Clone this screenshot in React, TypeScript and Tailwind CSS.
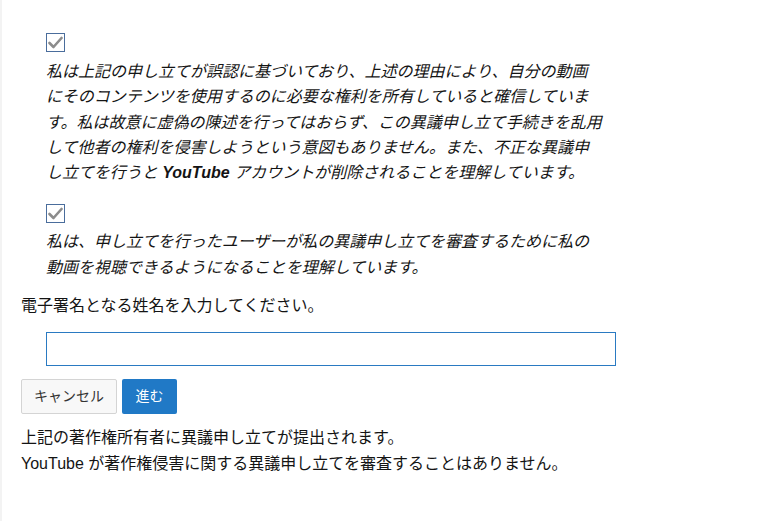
import React from 'react';

// Dispute confirmation form (YouTube copyright counter-notification, JA)

const FONT = { fontFamily: '"Liberation Sans", "Noto Sans CJK JP", sans-serif' };

function CheckedBox() {
  return (
    <div className="w-[19px] h-[19px] border border-[#4a6d9c] bg-white flex items-center justify-center">
      <svg width="15" height="13" viewBox="0 0 15 13">
        <polyline
          points="1.5,7 5.5,11 13.5,2"
          fill="none"
          stroke="#8c8c8c"
          strokeWidth="2.6"
          strokeLinecap="round"
          strokeLinejoin="round"
        />
      </svg>
    </div>
  );
}

export default function App() {
  return (
    <div className="min-h-[521px] bg-white border-l-2 border-[#f3f3f3] text-[#141414]" style={FONT}>
      <div className="pl-[19px] pt-[33px]">
        {/* First statement */}
        <div className="pl-[25px]">
          <CheckedBox />
          <p className="mt-[7px] text-[16px] leading-[25.3px] italic whitespace-nowrap">
            私は上記の申し立てが誤認に基づいており、上述の理由により、自分の動画
            <br />
            にそのコンテンツを使用するのに必要な権利を所有していると確信していま
            <br />
            す。私は故意に虚偽の陳述を行ってはおらず、この異議申し立て手続きを乱用
            <br />
            して他者の権利を侵害しようという意図もありません。また、不正な異議申
            <br />
            し立てを行うと <b className="font-bold">YouTube</b> アカウントが削除されることを理解しています。
          </p>
        </div>

        {/* Second statement */}
        <div className="pl-[25px] mt-[19px]">
          <CheckedBox />
          <p className="mt-[6px] text-[16px] leading-[25.3px] italic whitespace-nowrap">
            私は、申し立てを行ったユーザーが私の異議申し立てを審査するために私の
            <br />
            動画を視聴できるようになることを理解しています。
          </p>
        </div>

        <p className="mt-[13px] text-[16px] leading-[25px]">電子署名となる姓名を入力してください。</p>

        <div className="pl-[25px] mt-[14px]">
          <input
            type="text"
            className="block w-[570px] h-[34px] border border-[#2a7ac2] bg-white px-2 text-[16px] outline-none"
          />
        </div>

        <div className="flex gap-[5px] mt-[13px]">
          <button className="w-[96px] h-[35px] bg-[#f8f8f8] border border-[#d4d4d4] rounded-[2px] text-[14px] text-[#333]">
            キャンセル
          </button>
          <button className="w-[55px] h-[35px] bg-[#2079c6] rounded-[2px] text-[14px] text-white">
            進む
          </button>
        </div>

        <div className="mt-[11px] text-[16px] leading-[26px]">
          <p>上記の著作権所有者に異議申し立てが提出されます。</p>
          <p>YouTube が著作権侵害に関する異議申し立てを審査することはありません。</p>
        </div>
      </div>
    </div>
  );
}
